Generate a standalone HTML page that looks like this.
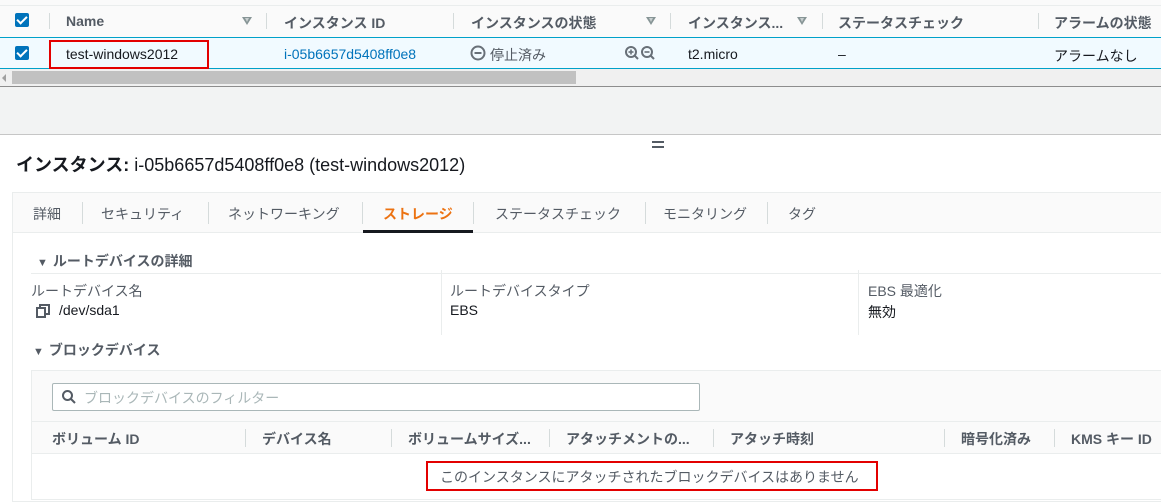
<!DOCTYPE html>
<html><head><meta charset="utf-8"><style>
*{margin:0;padding:0;box-sizing:border-box}
body{width:1161px;height:495px;overflow:hidden;background:#fff;font-family:"Liberation Sans","Noto Sans CJK JP",sans-serif;font-size:14px;color:#16191f;position:relative}
.a{position:absolute;white-space:nowrap}
.cb{position:absolute;width:14px;height:14px;background:#0073bb;border-radius:2px}
.cb:after{content:"";position:absolute;left:4px;top:1px;width:4px;height:8px;border:solid #fff;border-width:0 2px 2px 0;transform:rotate(45deg)}
.sep{position:absolute;width:1px;background:#d5dbdb}
.hd{font-weight:bold;color:#545b64}
.tri{position:absolute;width:0;height:0;border-left:5px solid transparent;border-right:5px solid transparent;border-top:8px solid #879596}
.tri:after{content:"";position:absolute;left:-2px;top:-7px;border-left:2px solid transparent;border-right:2px solid transparent;border-top:4px solid #c8cfd0}
.g{color:#545b64}
.t{font-size:11px;margin-right:5px}
</style></head><body>
<div class="a" style="left:0;top:0;width:1161px;height:6px;background:#fafafa;border-bottom:1px solid #eaeded"></div>
<div class="a" style="left:0;top:6px;width:1161px;height:31px;background:#fafafa"></div>
<div class="cb" style="left:15px;top:13px"></div>
<div class="sep" style="left:49px;top:13px;height:16px"></div>
<div class="a hd" style="left:66px;top:13px">Name</div>
<div class="tri" style="left:242px;top:17px"></div>
<div class="sep" style="left:266px;top:13px;height:16px"></div>
<div class="a hd" style="left:284px;top:13px">インスタンス ID</div>
<div class="sep" style="left:453px;top:13px;height:16px"></div>
<div class="a hd" style="left:471px;top:13px">インスタンスの状態</div>
<div class="tri" style="left:646px;top:17px"></div>
<div class="sep" style="left:670px;top:13px;height:16px"></div>
<div class="a hd" style="left:688px;top:13px">インスタンス...</div>
<div class="tri" style="left:797px;top:17px"></div>
<div class="sep" style="left:822px;top:13px;height:16px"></div>
<div class="a hd" style="left:838px;top:13px">ステータスチェック</div>
<div class="sep" style="left:1038px;top:13px;height:16px"></div>
<div class="a hd" style="left:1054px;top:13px">アラームの状態</div>
<div class="a" style="left:0;top:37px;width:1161px;height:32px;background:#f1faff;border-top:1px solid #00a1c9;border-bottom:1px solid #00a1c9"></div>
<div class="cb" style="left:15px;top:46px"></div>
<div class="a" style="left:49px;top:40px;width:160px;height:29px;border:2px solid #e30000"></div>
<div class="a" style="left:66px;top:46px">test-windows2012</div>
<div class="a" style="left:284px;top:46px;color:#0073bb">i-05b6657d5408ff0e8</div>
<svg class="a" style="left:470px;top:45px" width="16" height="16"><circle cx="8" cy="8" r="6.5" fill="none" stroke="#687078" stroke-width="2"/><line x1="4.5" y1="8" x2="11.5" y2="8" stroke="#687078" stroke-width="2"/></svg>
<div class="a g" style="left:490px;top:45px">停止済み</div>
<svg class="a" style="left:624px;top:45px" width="34" height="16"><circle cx="7" cy="7" r="5" fill="none" stroke="#687078" stroke-width="2"/><line x1="11" y1="11" x2="14" y2="14" stroke="#687078" stroke-width="2"/><line x1="4.5" y1="7" x2="9.5" y2="7" stroke="#687078" stroke-width="1.6"/><line x1="7" y1="4.5" x2="7" y2="9.5" stroke="#687078" stroke-width="1.6"/><circle cx="23" cy="7" r="5" fill="none" stroke="#687078" stroke-width="2"/><line x1="27" y1="11" x2="30" y2="14" stroke="#687078" stroke-width="2"/><line x1="20.5" y1="7" x2="25.5" y2="7" stroke="#687078" stroke-width="1.6"/></svg>
<div class="a" style="left:688px;top:46px">t2.micro</div>
<div class="a" style="left:838px;top:46px">–</div>
<div class="a" style="left:1054px;top:46px">アラームなし</div>
<div class="a" style="left:0;top:69px;width:1161px;height:18px;background:#f0f0f0;border-bottom:1px solid #8d8d8d"></div>
<div class="a" style="left:2px;top:74px;width:0;height:0;border-top:4px solid transparent;border-bottom:4px solid transparent;border-right:4px solid #a0a0a0"></div>
<div class="a" style="left:12px;top:71px;width:564px;height:13px;background:#c1c1c1"></div>
<div class="a" style="left:0;top:87px;width:1161px;height:48px;background:#f2f3f3;border-bottom:1px solid #c6c6c6"></div>
<div class="a" style="left:652px;top:141px;width:12px;height:2px;background:#545b64"></div>
<div class="a" style="left:652px;top:146px;width:12px;height:2px;background:#545b64"></div>
<div class="a" style="left:16px;top:151px;font-size:18px;font-weight:bold"><span>インスタンス:</span><span style="font-weight:normal"> i-05b6657d5408ff0e8 (test-windows2012)</span></div>
<div class="a" style="left:12px;top:192px;width:1160px;height:310px;border:1px solid #eaeded"></div>
<div class="a" style="left:13px;top:193px;width:1148px;height:40px;background:#fafafa;border-bottom:1px solid #eaeded"></div>
<div class="a g" style="left:33px;top:204px">詳細</div>
<div class="sep" style="left:82px;top:202px;height:22px"></div>
<div class="a g" style="left:101px;top:204px">セキュリティ</div>
<div class="sep" style="left:208px;top:202px;height:22px"></div>
<div class="a g" style="left:228px;top:204px">ネットワーキング</div>
<div class="sep" style="left:362px;top:202px;height:22px"></div>
<div class="a" style="left:383px;top:204px;color:#ec7211;font-weight:bold">ストレージ</div>
<div class="a" style="left:363px;top:230px;width:110px;height:3px;background:#16191f"></div>
<div class="sep" style="left:473px;top:202px;height:22px"></div>
<div class="a g" style="left:495px;top:204px">ステータスチェック</div>
<div class="sep" style="left:645px;top:202px;height:22px"></div>
<div class="a g" style="left:663px;top:204px">モニタリング</div>
<div class="sep" style="left:767px;top:202px;height:22px"></div>
<div class="a g" style="left:788px;top:204px">タグ</div>
<div class="a" style="left:37px;top:251px;font-weight:bold;color:#545b64"><span class="t">▼</span>ルートデバイスの詳細</div>
<div class="a" style="left:31px;top:273px;width:1130px;height:1px;background:#eaeded"></div>
<div class="sep" style="left:441px;top:270px;height:65px;background:#eaeded"></div>
<div class="sep" style="left:858px;top:270px;height:65px;background:#eaeded"></div>
<div class="a g" style="left:31px;top:281px">ルートデバイス名</div>
<svg class="a" style="left:36px;top:304px" width="14" height="14"><rect x="1" y="4" width="8" height="9" fill="none" stroke="#545b64" stroke-width="2"/><path d="M4 4V1h9v9h-4" fill="none" stroke="#545b64" stroke-width="2"/></svg>
<div class="a" style="left:59px;top:302px">/dev/sda1</div>
<div class="a g" style="left:450px;top:281px">ルートデバイスタイプ</div>
<div class="a" style="left:450px;top:302px">EBS</div>
<div class="a g" style="left:868px;top:281px">EBS 最適化</div>
<div class="a" style="left:868px;top:302px">無効</div>
<div class="a" style="left:33px;top:340px;font-weight:bold;color:#545b64"><span class="t">▼</span>ブロックデバイス</div>
<div class="a" style="left:31px;top:370px;width:1140px;height:130px;background:#fff;border:1px solid #eaeded"></div>
<div class="a" style="left:32px;top:371px;width:1130px;height:51px;background:#fafafa"></div>
<div class="a" style="left:52px;top:383px;width:648px;height:28px;border:1px solid #aab7b8;background:#fff;border-radius:2px"></div>
<svg class="a" style="left:61px;top:389px" width="16" height="16"><circle cx="6.5" cy="6.5" r="4.5" fill="none" stroke="#545b64" stroke-width="2"/><line x1="10" y1="10" x2="14" y2="14" stroke="#545b64" stroke-width="2"/></svg>
<div class="a" style="left:84px;top:388px;color:#aab7b8">ブロックデバイスのフィルター</div>
<div class="a" style="left:32px;top:421px;width:1130px;height:33px;background:#fafafa;border-top:1px solid #eaeded;border-bottom:1px solid #eaeded"></div>
<div class="a hd" style="left:52px;top:429px">ボリューム ID</div>
<div class="sep" style="left:245px;top:429px;height:18px"></div>
<div class="a hd" style="left:262px;top:429px">デバイス名</div>
<div class="sep" style="left:391px;top:429px;height:18px"></div>
<div class="a hd" style="left:408px;top:429px">ボリュームサイズ...</div>
<div class="sep" style="left:549px;top:429px;height:18px"></div>
<div class="a hd" style="left:566px;top:429px">アタッチメントの...</div>
<div class="sep" style="left:713px;top:429px;height:18px"></div>
<div class="a hd" style="left:730px;top:429px">アタッチ時刻</div>
<div class="sep" style="left:944px;top:429px;height:18px"></div>
<div class="a hd" style="left:961px;top:429px">暗号化済み</div>
<div class="sep" style="left:1054px;top:429px;height:18px"></div>
<div class="a hd" style="left:1071px;top:429px">KMS キー ID</div>
<div class="a" style="left:426px;top:461px;width:452px;height:30px;border:2px solid #e30000"></div>
<div class="a g" style="left:440px;top:467px">このインスタンスにアタッチされたブロックデバイスはありません</div>
</body></html>
